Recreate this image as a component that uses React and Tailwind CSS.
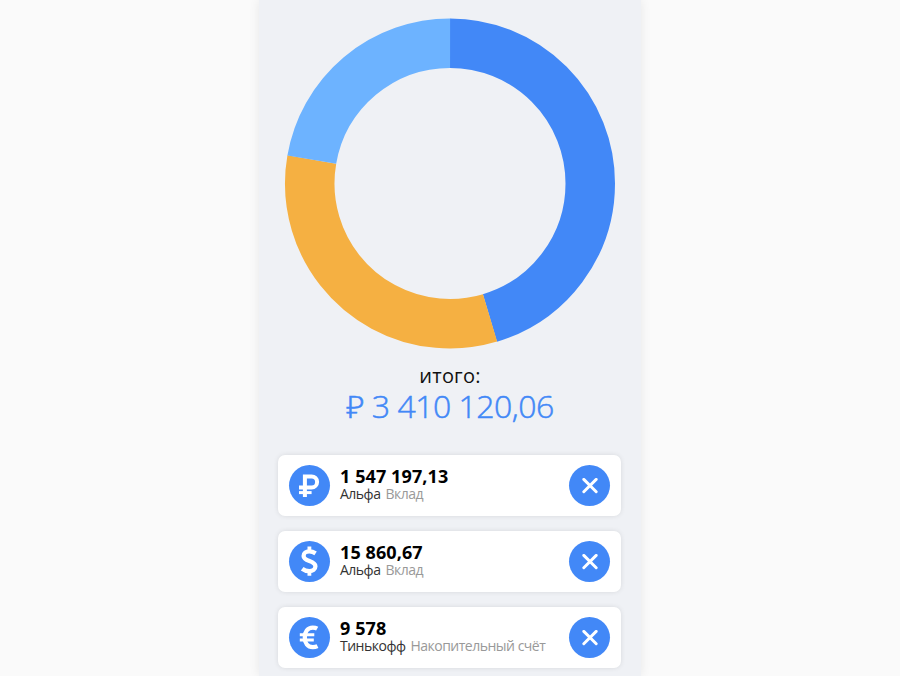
const R = 140.25;
const C = 2 * Math.PI * R;

const segments = [
  { from: 0, to: 163.4, color: "#4288f7" },
  { from: 163.4, to: 279.8, color: "#f5b042" },
  { from: 279.8, to: 360, color: "#6db3ff" },
];

const glyphs = {
  ruble: (
    <>
      <path d="M15.9 32V11.4H22.6a5.5 5.5 0 0 1 0 11H10" strokeWidth="4" />
      <path d="M10 27.6H22.6" strokeWidth="3" />
    </>
  ),
  dollar: (
    <>
      <path d="M20.4 5.6V10M20.4 31V34.8" strokeWidth="3.8" />
      <path d="M26.6 12.4C24.4 10.9 22.4 10.4 20.2 10.4C16.8 10.4 14.6 12.1 14.6 14.9C14.6 20.9 26.4 19.2 26.4 25.3C26.4 28.4 23.8 30.1 20.4 30.1C17.6 30.1 15.2 29.3 13.2 27.7" strokeWidth="4.3" />
    </>
  ),
  euro: (
    <>
      <path d="M28.2 11.7C26.8 10.9 25.4 10.7 23.8 10.7C18.6 10.7 15.8 14.8 15.8 20.4C15.8 26 18.6 30.1 23.8 30.1C25.6 30.1 27 29.8 28.5 29.1" strokeWidth="4.3" />
      <path d="M10.8 17.7H25.3M10.8 22.9H24.8" strokeWidth="3" />
    </>
  ),
};

const accounts = [
  { icon: "ruble", amount: "1 547 197,13", bank: "Альфа", kind: "Вклад" },
  { icon: "dollar", amount: "15 860,67", bank: "Альфа", kind: "Вклад" },
  { icon: "euro", amount: "9 578", bank: "Тинькофф", kind: "Накопительный счёт" },
];

function Donut() {
  return (
    <svg width="332" height="332" viewBox="-166 -166.5 332 332" className="block shrink-0">
      {segments.map((s) => (
        <circle
          key={s.color}
          r={R}
          fill="none"
          stroke={s.color}
          strokeWidth="49.5"
          strokeDasharray={`${((s.to - s.from) / 360) * C} ${C}`}
          transform={`rotate(${s.from - 90})`}
        />
      ))}
    </svg>
  );
}

function Account({ icon, amount, bank, kind }) {
  return (
    <li className="flex h-[61px] items-center rounded-[7px] bg-white px-[11px] shadow-[0_0_5px_rgba(0,0,0,0.1)]">
      <span className="flex size-[41px] shrink-0 rounded-full bg-[#4288f7]">
        <svg width="41" height="41" viewBox="0 0 41 41" fill="none" stroke="#fff">
          {glyphs[icon]}
        </svg>
      </span>
      <div className="ml-[10px] flex-1 whitespace-nowrap">
        <div className="text-[18px] leading-[18px] font-bold tracking-[0.1px] text-black">{amount}</div>
        <div className="flex gap-[5px] pb-[2px] text-[14px] leading-[18px] tracking-[-0.5px] text-[#333]">
          <span>{bank}</span>
          <span className="text-[#999]">{kind}</span>
        </div>
      </div>
      <button className="flex size-[41px] shrink-0 items-center justify-center rounded-full bg-[#4288f7]">
        <svg width="16" height="16" viewBox="0 0 16 16" stroke="#fff" strokeWidth="2.9" strokeLinecap="round">
          <path d="M1.8 1.4 14.2 13.8M14.2 1.4 1.8 13.8" />
        </svg>
      </button>
    </li>
  );
}

export default function App() {
  return (
    <div className="flex h-[676px] justify-center overflow-hidden bg-[#fafafa] font-['Open_Sans','Noto_Sans',sans-serif]">
      <main className="flex w-[382px] flex-col items-center bg-[#eff1f5] pt-[17px] shadow-[0_0_10px_rgba(0,0,0,0.08)]">
        <Donut />
        <div className="mt-[15px] text-[20px] leading-[24px] tracking-[0.2px] text-[#111]">итого:</div>
        <div className="text-[32px] leading-[36px] font-light tracking-[-0.5px] whitespace-nowrap text-[#4288f7] [-webkit-text-stroke:0.5px_#4288f7]">
          ₽ 3 410 120,06
        </div>
        <ul className="mt-[31px] mr-[1px] flex w-[343px] flex-col gap-[15px]">
          {accounts.map((a) => (
            <Account key={a.amount} {...a} />
          ))}
        </ul>
      </main>
    </div>
  );
}
